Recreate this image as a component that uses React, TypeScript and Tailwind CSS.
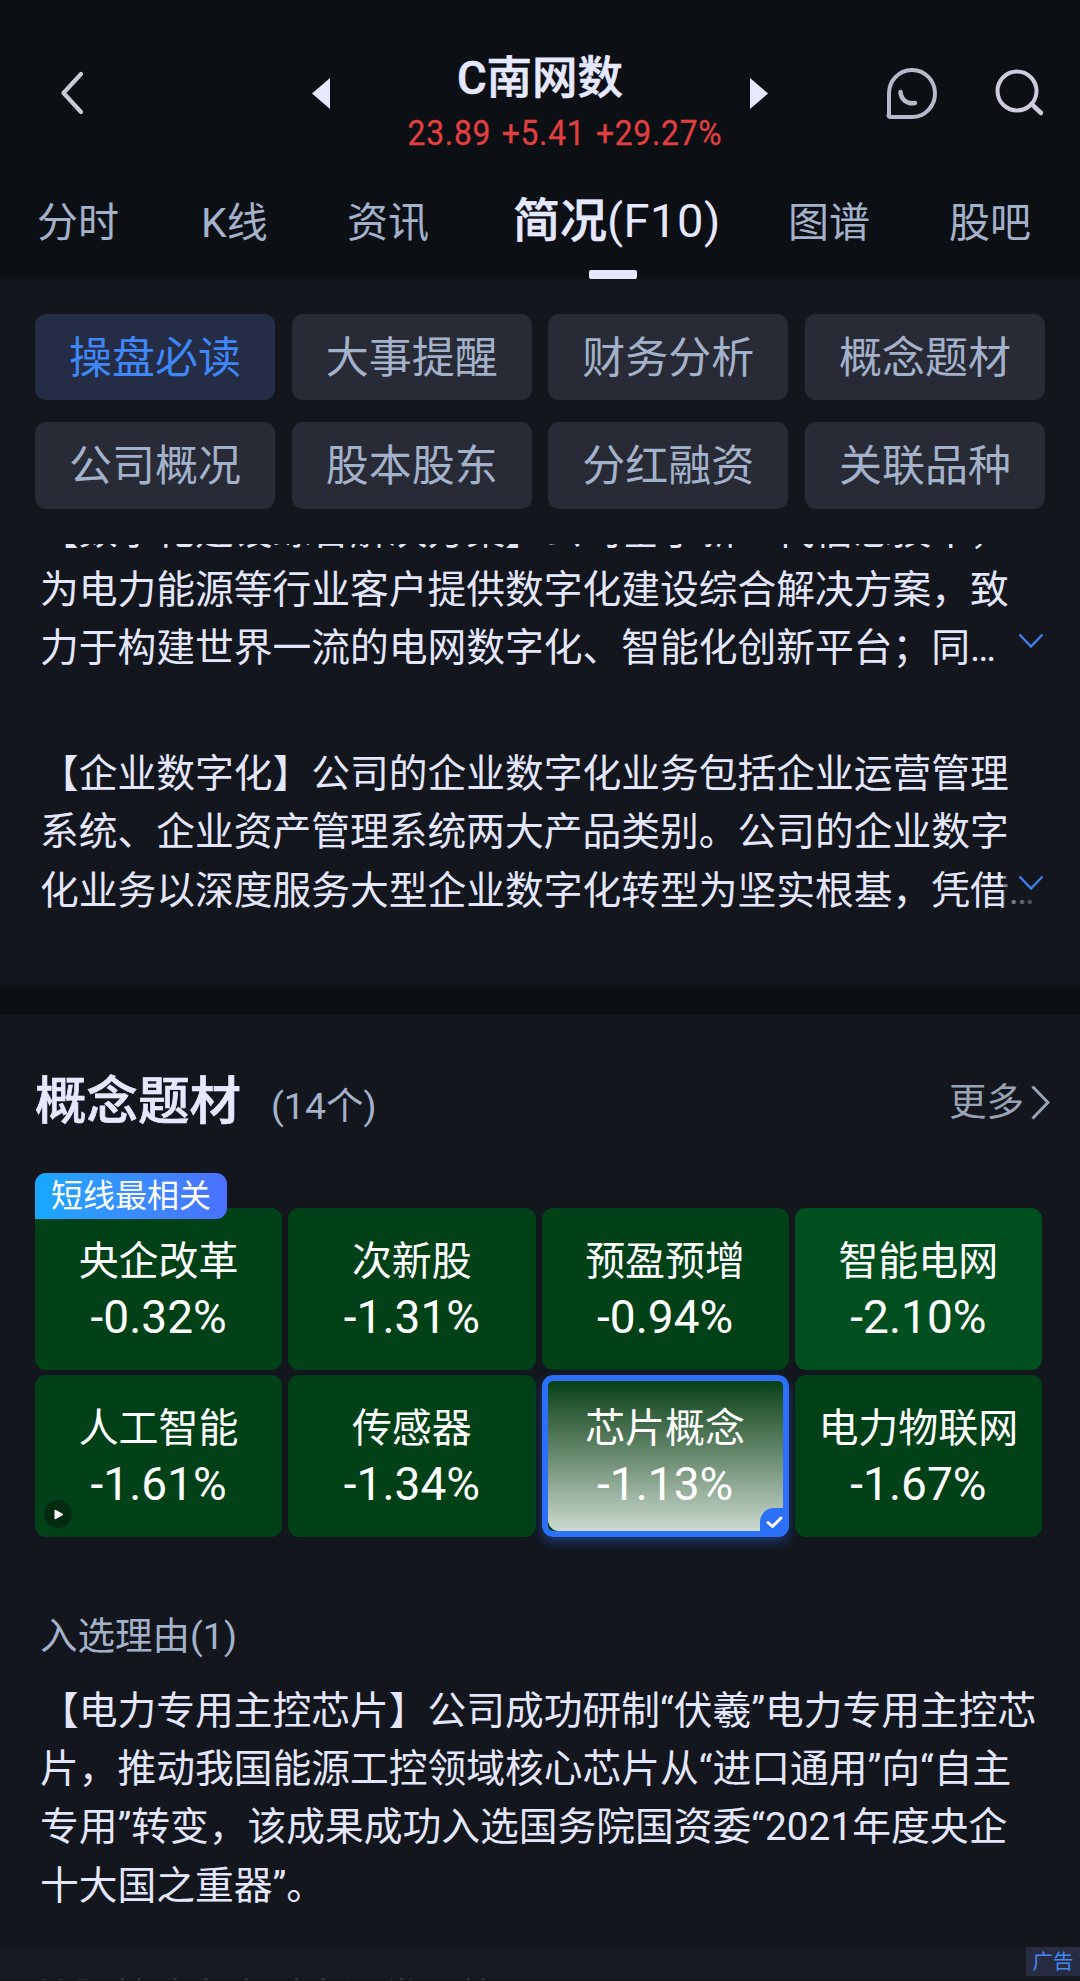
import clsx from "clsx";

const TABS = [
  { label: "分时", className: "w-[82px]" },
  { label: "K线", className: "ml-[82px] w-[66px]" },
  { label: "资讯", className: "ml-[80px] w-[82px]" },
];

const TABS_RIGHT = [
  { label: "图谱", className: "ml-[67px] w-[82px]" },
  { label: "股吧", className: "ml-[79px] w-[82px]" },
];

const SECTIONS = [
  "操盘必读",
  "大事提醒",
  "财务分析",
  "概念题材",
  "公司概况",
  "股本股东",
  "分红融资",
  "关联品种",
];

const CONCEPTS = [
  { name: "央企改革", change: "-0.32%" },
  { name: "次新股", change: "-1.31%" },
  { name: "预盈预增", change: "-0.94%" },
  { name: "智能电网", change: "-2.10%", strong: true },
  { name: "人工智能", change: "-1.61%", video: true },
  { name: "传感器", change: "-1.34%" },
  { name: "芯片概念", change: "-1.13%", selected: true },
  { name: "电力物联网", change: "-1.67%" },
];

const BUSINESS = [
  [
    "【数字化建设综合解决方案】公司基于新一代信息技术，",
    "为电力能源等行业客户提供数字化建设综合解决方案，致",
    "力于构建世界一流的电网数字化、智能化创新平台；同…",
  ],
  [
    "【企业数字化】公司的企业数字化业务包括企业运营管理",
    "系统、企业资产管理系统两大产品类别。公司的企业数字",
    "化业务以深度服务大型企业数字化转型为坚实根基，凭借…",
  ],
];

const REASON = [
  "【电力专用主控芯片】公司成功研制“伏羲”电力专用主控芯",
  "片，推动我国能源工控领域核心芯片从“进口通用”向“自主",
  "专用”转变，该成果成功入选国务院国资委“2021年度央企",
  "十大国之重器”。",
];

const Header = () => (
  <header className="h-[279px] bg-[#0c0f14]">
    <div className="flex h-[160px] items-start pl-[59px]">
      <svg className="mt-[71px] h-[44px] w-[24px]" viewBox="0 0 24 44" fill="none">
        <path
          d="M22 3 4.500 22 22 41"
          stroke="#c8c8d6"
          strokeWidth="4.2"
          strokeLinecap="round"
          strokeLinejoin="round"
        />
      </svg>
      <svg className="mt-[78px] ml-[229px] h-[31px] w-[18px]" viewBox="0 0 18 31">
        <path d="M18 0v31L0 15.5z" fill="#e6e8ff" />
      </svg>
      <div className="flex w-[420px] flex-col items-center">
        <h1 className="mt-[49px] h-[60px] text-[45.5px] leading-[60px] font-medium whitespace-nowrap text-[#e6e8ff] [-webkit-text-stroke:0.6px_#e6e8ff]">
          C南网数
        </h1>
        <p className="ml-[49px] h-[50px] origin-center scale-x-[0.91] text-[35px] leading-[50px] tracking-[0.8px] [word-spacing:2px] whitespace-nowrap text-[#e0403f] [-webkit-text-stroke:0.3px_#e0403f]">
          23.89 +5.41 +29.27%
        </p>
      </div>
      <svg className="mt-[78px] h-[31px] w-[18px]" viewBox="0 0 18 31">
        <path d="M0 0v31l18-15.5z" fill="#e6e8ff" />
      </svg>
      <svg className="mt-[68px] ml-[117px] h-[52px] w-[53px]" viewBox="0 0 53 52" fill="none">
        <path
          d="M4 48V26A23 23.5 0 1 1 27 49H5.500Q3.500 49 3.500 47Z"
          stroke="#b4bccb"
          strokeWidth="4"
          strokeLinejoin="round"
        />
        <path d="M15.500 24c.5 7 6 12.500 14.500 11" stroke="#b4bccb" strokeWidth="4.500" strokeLinecap="round" />
      </svg>
      <svg className="mt-[68px] ml-[56px] h-[50px] w-[52px]" viewBox="0 0 52 50" fill="none">
        <circle cx="23" cy="23" r="19.500" stroke="#cdcbdc" strokeWidth="4" />
        <path d="M37.500 36 47 45" stroke="#cdcbdc" strokeWidth="4.500" strokeLinecap="round" />
      </svg>
    </div>
    <nav className="flex h-[119px] pl-[37px] text-[41px] leading-[126px] whitespace-nowrap text-[#a3b1ca]">
      {TABS.map((tab) => (
        <span key={tab.label} className={tab.className}>
          {tab.label}
        </span>
      ))}
      <div className="ml-[84px] flex w-[208px] flex-col text-[#e6e8ff]">
        <span className="h-[110px] text-[47px] leading-[122px]">
          <span className="font-medium [-webkit-text-stroke:0.6px_#e6e8ff]">简况</span>
          <span className="tracking-[0.5px]">(F10)</span>
        </span>
        <span className="ml-[76px] h-[9px] w-[48px] rounded-[2px] bg-[#e6e8ff]" />
      </div>
      {TABS_RIGHT.map((tab) => (
        <span key={tab.label} className={tab.className}>
          {tab.label}
        </span>
      ))}
    </nav>
  </header>
);

const ExpandArrow = () => (
  <div className="absolute right-[36px] bottom-[6px] flex h-[54px] w-[41px] items-start justify-end bg-gradient-to-r from-[#15171c]/40 to-[#14161d]/90 pt-[15px]">
    <svg className="h-[16px] w-[26px]" viewBox="0 0 26 16" fill="none">
      <path d="M1.500 1.500 13 13.500 24.500 1.500" stroke="#3b7fec" strokeWidth="2.500" />
    </svg>
  </div>
);

const ConceptTile = ({
  name,
  change,
  strong,
  video,
  selected,
}: {
  name: string;
  change: string;
  strong?: boolean;
  video?: boolean;
  selected?: boolean;
}) => (
  <div
    className={clsx(
      "relative flex h-[162px] flex-col items-center overflow-hidden rounded-[11px] text-white",
      strong ? "bg-[#014f1e]" : "bg-[#014118]",
      selected && "shadow-[0_5px_12px_rgba(45,111,247,0.4)]",
    )}
  >
    {selected && (
      <span className="absolute inset-[6px] rounded-b-[11px] bg-gradient-to-b from-[#014118] to-[#cddbd1]" />
    )}
    <span className="relative mt-[26px] h-[56px] text-[40px] leading-[56px] whitespace-nowrap">
      {name}
    </span>
    <span className="relative h-[56px] text-[46px] leading-[55px] whitespace-nowrap">
      {change}
    </span>
    {video && (
      <span className="absolute bottom-[9px] left-[9px] flex h-[28px] w-[28px] items-center justify-center rounded-full bg-[#012a10]">
        <svg className="ml-[2px] h-[11px] w-[10px]" viewBox="0 0 10 11">
          <path d="M1 1v9l8-4.500z" fill="#fff" stroke="#fff" strokeLinejoin="round" />
        </svg>
      </span>
    )}
    {selected && (
      <>
        <span className="absolute inset-0 rounded-[11px] border-[6px] border-[#2c6ff8]" />
        <span className="absolute right-0 bottom-0 flex h-[29px] w-[29px] rounded-tl-[14px] bg-[#2c6ff8]">
          <svg className="mt-[8px] ml-[6px] h-[13px] w-[17px]" viewBox="0 0 17 13" fill="none">
            <path
              d="M2 6.500 6.500 10.500 15 2"
              stroke="#fff"
              strokeWidth="3"
              strokeLinecap="round"
              strokeLinejoin="round"
            />
          </svg>
        </span>
      </>
    )}
  </div>
);

export default function App() {
  return (
    <div className="flex h-[1981px] w-[1080px] flex-col overflow-hidden bg-[#13161d] font-[Roboto,'Noto_Sans_CJK_SC',sans-serif]">
      <Header />

      {/* F10 section shortcuts */}
      <div className="grid w-[1010px] grid-cols-4 gap-x-[16.5px] gap-y-[22px] self-center pt-[34.5px]">
        {SECTIONS.map((section, index) => (
          <div
            key={section}
            className={clsx(
              "h-[86.5px] rounded-[11px] text-center text-[43px] leading-[88px]",
              index === 0 ? "bg-[#242d45] text-[#3f86f7]" : "bg-[#282a35] text-[#a3b1ca]",
            )}
          >
            {section}
          </div>
        ))}
      </div>

      {/* Business highlights, scrolled under the shortcuts */}
      <div className="mt-[35.5px] h-[441px] overflow-hidden">
        <div className="-mt-[42px] flex flex-col gap-[67px]">
          {BUSINESS.map((lines) => (
            <div key={lines[0]} className="relative pl-[40px]">
              {lines.map((line) => (
                <p
                  key={line}
                  className="h-[58.5px] text-[38.75px] leading-[58.5px] whitespace-nowrap text-[#e4e6fb]"
                >
                  {line}
                </p>
              ))}
              <ExpandArrow />
            </div>
          ))}
        </div>
      </div>
      <div className="h-[29px] bg-[#0c0f13]" />

      {/* Concepts */}
      <div className="flex h-[159px] items-start pt-[48px] pl-[35px]">
        <h2 className="h-[80px] text-[51.5px] leading-[80px] font-medium text-[#e6e8ff] [-webkit-text-stroke:0.7px_#e6e8ff]">
          概念题材
        </h2>
        <span className="mt-[4px] ml-[30px] text-[37.5px] leading-[80px] text-[#a3b1ca]">
          (14个)
        </span>
        <div className="mr-[30px] ml-auto flex items-center text-[37.5px] leading-[80px] text-[#99a3b3]">
          更多
          <svg className="ml-[7px] h-[35px] w-[19px]" viewBox="0 0 19 35" fill="none">
            <path d="M1.500 1.500 17 17.500 1.500 33.500" stroke="#99a3b3" strokeWidth="3" />
          </svg>
        </div>
      </div>
      <div className="relative pt-[35px] pl-[35px]">
        <div className="grid w-[1007px] grid-cols-4 gap-x-[6px] gap-y-[5px]">
          {CONCEPTS.map((concept) => (
            <ConceptTile key={concept.name} {...concept} />
          ))}
        </div>
        <span className="absolute top-0 left-[35px] h-[46px] w-[192px] rounded-[11px] rounded-bl-none bg-gradient-to-r from-[#14a8ff] to-[#4a70ff] text-center text-[32px] leading-[46px] text-white">
          短线最相关
        </span>
      </div>

      <h3 className="mt-[70px] ml-[40px] h-[58px] text-[37.5px] leading-[58px] text-[#a3b1ca]">
        入选理由(1)
      </h3>
      <div className="mt-[17px] ml-[40px] h-[264px]">
        {REASON.map((line) => (
          <p
            key={line}
            className="h-[58.2px] text-[38.75px] leading-[58.2px] whitespace-nowrap text-[#e4e6fb]"
          >
            {line}
          </p>
        ))}
      </div>

      {/* Ad strip */}
      <div className="flex h-[34px] shrink-0 items-start justify-between overflow-hidden bg-[#171922]">
        <span className="mt-[29px] ml-[35px] text-[38.500px] leading-[46px] text-[#343a4a]">
          炒股就选东方财富证券更放心
        </span>
        <span className="mt-px h-[29px] w-[54px] bg-[#272c42] text-center text-[20.5px] leading-[31px] text-[#4687f0]">
          广告
        </span>
      </div>
    </div>
  );
}
